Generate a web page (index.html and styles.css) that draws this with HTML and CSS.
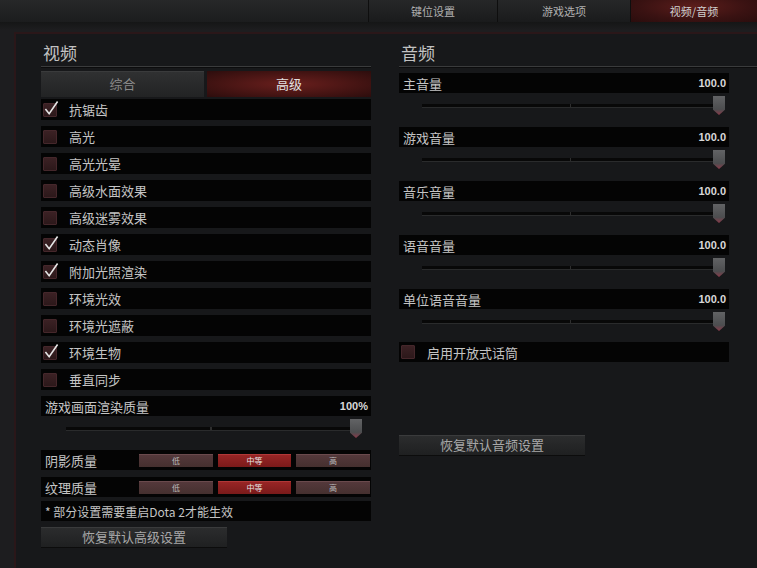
FILE: index.html
```html
<!DOCTYPE html>
<html lang="zh-CN">

<head>
    <meta charset="UTF-8">
    <title>视频/音频设置</title>
    <link rel="stylesheet" href="styles.css">
</head>

<body>
    <div class="topbar">
        <div class="tabs">
            <div class="tab t1">键位设置</div>
            <div class="tab t2">游戏选项</div>
            <div class="tab t3 active">视频/音频</div>
        </div>
    </div>

    <div class="stage">
        <div class="panel">
            <!-- video column -->
            <section class="col video">
                <h2>视频</h2>
                <div class="subtabs">
                    <div class="subtab">综合</div>
                    <div class="subtab on">高级</div>
                </div>

                <div class="row"><span class="check on"><svg viewBox="0 0 16 16"><path d="M1.5 8.5 L5.5 13.5 L14.5 0.5" /></svg></span>抗锯齿</div>
                <div class="row"><span class="check"></span>高光</div>
                <div class="row"><span class="check"></span>高光光晕</div>
                <div class="row"><span class="check"></span>高级水面效果</div>
                <div class="row"><span class="check"></span>高级迷雾效果</div>
                <div class="row"><span class="check on"><svg viewBox="0 0 16 16"><path d="M1.5 8.5 L5.5 13.5 L14.5 0.5" /></svg></span>动态肖像</div>
                <div class="row"><span class="check on"><svg viewBox="0 0 16 16"><path d="M1.5 8.5 L5.5 13.5 L14.5 0.5" /></svg></span>附加光照渲染</div>
                <div class="row"><span class="check"></span>环境光效</div>
                <div class="row"><span class="check"></span>环境光遮蔽</div>
                <div class="row"><span class="check on"><svg viewBox="0 0 16 16"><path d="M1.5 8.5 L5.5 13.5 L14.5 0.5" /></svg></span>环境生物</div>
                <div class="row"><span class="check"></span>垂直同步</div>

                <div class="row label">游戏画面渲染质量<span class="val">100%</span></div>
                <div class="slider left"><div class="track"><span class="thumb"></span></div></div>

                <div class="row quality">
                    <span class="qname">阴影质量</span>
                    <div class="opts">
                        <span>低</span><span class="on">中等</span><span>高</span>
                    </div>
                </div>
                <div class="row quality last">
                    <span class="qname">纹理质量</span>
                    <div class="opts">
                        <span>低</span><span class="on">中等</span><span>高</span>
                    </div>
                </div>

                <div class="row note">* 部分设置需要重启Dota 2才能生效</div>
                <div class="reset">恢复默认高级设置</div>
            </section>

            <!-- audio column -->
            <section class="col audio">
                <h2>音频</h2>

                <div class="vol first">
                    <div class="row label">主音量<span class="val">100.0</span></div>
                    <div class="slider"><div class="track"><span class="thumb"></span></div></div>
                </div>
                <div class="vol">
                    <div class="row label">游戏音量<span class="val">100.0</span></div>
                    <div class="slider"><div class="track"><span class="thumb"></span></div></div>
                </div>
                <div class="vol">
                    <div class="row label">音乐音量<span class="val">100.0</span></div>
                    <div class="slider"><div class="track"><span class="thumb"></span></div></div>
                </div>
                <div class="vol">
                    <div class="row label">语音音量<span class="val">100.0</span></div>
                    <div class="slider"><div class="track"><span class="thumb"></span></div></div>
                </div>
                <div class="vol">
                    <div class="row label">单位语音音量<span class="val">100.0</span></div>
                    <div class="slider"><div class="track"><span class="thumb"></span></div></div>
                </div>

                <div class="row mic"><span class="check"></span>启用开放式话筒</div>

                <div class="reset audio-reset">恢复默认音频设置</div>
            </section>
        </div>
    </div>
</body>

</html>
```

FILE: styles.css
```css
body {
    margin: 0;
    width: 757px;
    height: 568px;
    overflow: hidden;
    background-color: #1b1c1d;
    font-family: "Noto Sans CJK SC", "Noto Sans", sans-serif;
    color: #c4c4c4;
}

/* top tabs */
.topbar {
    height: 22px;
    background: linear-gradient(#272829, #1c1d1e);
}

.tabs {
    display: flex;
    margin-left: 368px;
    height: 22px;
}

.tab {
    height: 22px;
    line-height: 22px;
    text-align: center;
    font-size: 11px;
    color: #b0b0b0;
    background: linear-gradient(#262728, #1a1b1c);
    border-left: 1px solid #0e0e0e;
    box-sizing: border-box;
}

.t1 { width: 129px; }
.t2 { width: 133px; }
.t3 { width: 127px; }

.tab.active {
    color: #d0d0d0;
    background: radial-gradient(ellipse at 50% 30%, #5c1d1b, #3a1212 60%, #2a0d0d);
}

/* frame */
.stage {
    padding: 10px 0 0 14px;
    height: 536px;
    background: linear-gradient(#151616, #1d1d1f 8px);
}

.panel {
    display: flex;
    gap: 28px;
    height: 100%;
    padding: 9px 0 0 25px;
    box-sizing: border-box;
    background-color: #17181a;
    border-top: 2px solid #2a1719;
    border-left: 2px solid #2a1719;
}

.col.video {
    width: 330px;
}

.col.audio {
    flex: 1;
}

h2 {
    margin: 0;
    font-size: 17px;
    line-height: 20px;
    font-weight: normal;
    color: #c2c2c2;
    padding: 0 0 3px 2px;
    border-bottom: 1px solid #3a3b3c;
    box-shadow: 0 1px 0 #0c0c0d;
}

/* sub tabs */
.subtabs {
    display: flex;
    gap: 3px;
    margin: 4px 0 2px;
}

.subtab {
    width: 163px;
    height: 26px;
    line-height: 26px;
    text-align: center;
    font-size: 13px;
    color: #8a8a8a;
    background: linear-gradient(#303132, #222324);
    box-shadow: inset 0 1px 0 #3a3b3c;
}

.subtab.on {
    width: 164px;
    color: #e2e2e2;
    background: radial-gradient(ellipse at 50% 50%, #6a1f1d, #421312 65%, #2c0d0d);
    box-shadow: none;
}

/* rows */
.row {
    display: flex;
    align-items: center;
    box-sizing: border-box;
    height: 21px;
    margin-bottom: 6px;
    padding-left: 2px;
    background-color: #040404;
    font-size: 13px;
    color: #c4c4c4;
}

.check {
    position: relative;
    width: 12px;
    height: 12px;
    margin: 0 12px 0 0;
    background: linear-gradient(#3b2124, #2c181a);
    border: 1px solid #45272b;
    border-radius: 1px;
}

.check svg {
    position: absolute;
    left: 0;
    top: -3px;
    width: 15px;
    height: 15px;
}

.check svg path {
    fill: none;
    stroke: #e6e6e6;
    stroke-width: 1.7;
}

.row.label {
    justify-content: space-between;
    height: 20px;
    margin-bottom: 0;
    padding: 0 3px 0 4px;
}

.val {
    font-family: "Liberation Sans", Arial, sans-serif;
    font-weight: bold;
    font-size: 11px;
    color: #d8d8d8;
}

/* sliders */
.slider {
    height: 27px;
    margin-bottom: 7px;
}

.track {
    position: relative;
    top: 11px;
    height: 3px;
    margin: 0 10px 0 23px;
    background: linear-gradient(90deg, #080808 49.7%, #2e2e2e 49.7%, #2e2e2e 50.3%, #080808 50.3%);
    border-bottom: 1px solid #2a2b2c;
}

.slider.left .track {
    margin: 0 15px 0 25px;
}

.thumb {
    position: absolute;
    right: -6px;
    top: -8px;
    width: 12px;
    height: 19px;
    background: linear-gradient(#626365, #4c4d4f 70%, #8a3a4a);
    clip-path: polygon(0 0, 100% 0, 100% 72%, 50% 100%, 0 72%);
}

/* quality */
.row.quality {
    height: 20px;
    margin-bottom: 7px;
    padding-left: 4px;
}

.row.quality.last {
    margin-bottom: 4px;
}

.qname {
    width: 93px;
}

.opts {
    display: grid;
    grid-template-columns: 74px 73px 74px;
    gap: 5px;
    margin-left: auto;
    margin-right: 1px;
}

.opts span {
    height: 13px;
    line-height: 13px;
    text-align: center;
    font-size: 8px;
    color: #bcbcbc;
    background: linear-gradient(#55393c, #45302f);
    box-shadow: inset 0 1px 0 #6a4a4d;
}

.opts span.on {
    color: #e8e8e8;
    background: linear-gradient(#9a2626, #7a1a1a);
    box-shadow: inset 0 1px 0 #b03838;
}

.row.note {
    height: 20px;
    padding-left: 4px;
    font-size: 12px;
}

/* reset buttons */
.reset {
    width: 186px;
    height: 20px;
    line-height: 20px;
    text-align: center;
    font-size: 13px;
    color: #a8a8a8;
    background: linear-gradient(#2c2d2e, #1f2021);
    box-shadow: inset 0 1px 0 #3a3b3c, 0 1px 0 #0c0c0c;
}

/* audio */
.audio .row,
.audio .slider {
    width: 330px;
}

.vol.first {
    margin-top: 6px;
}

.row.mic {
    height: 20px;
    margin-top: -1px;
}

.audio-reset {
    margin-top: 73px;
}
```
